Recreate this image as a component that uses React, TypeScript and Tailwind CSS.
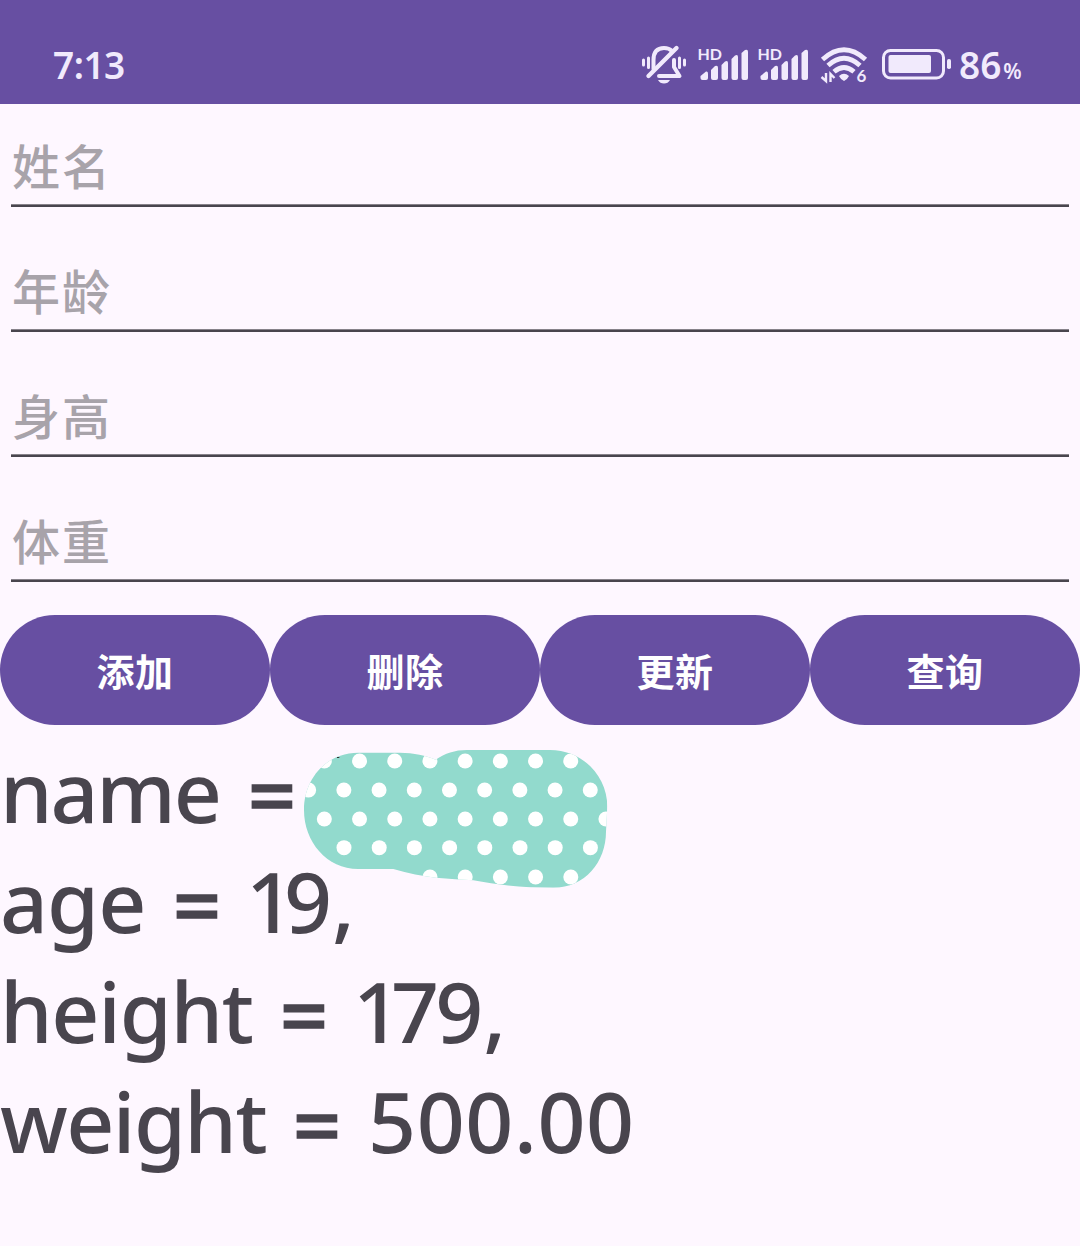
import React from 'react';

const fields = ['姓名', '年龄', '身高', '体重'];
const actions = ['添加', '删除', '更新', '查询'];

function MutedBell() {
  return (
    <svg className="h-[44px] w-[50px] shrink-0" viewBox="639 42 50 44" fill="none" stroke="#f1eafc" strokeWidth="4" strokeLinecap="round" strokeLinejoin="round">
      <path d="M653.500 69V60C653.500 52 657 48 664 48C667.500 48 670 49 672 51" />
      <path d="M674 60V67L679.500 76H659" />
      <path d="M648.500 76L676.500 48" strokeWidth="4.400" />
      <path d="M643.500 60V65M648.500 58V67.500M679.500 58V67.500M684.500 60V65" strokeWidth="3" />
      <path d="M658 80H670Q668 83.500 664 83.500T658 80Z" fill="#f1eafc" stroke="none" />
    </svg>
  );
}

function Signal() {
  return (
    <svg className="h-[44px] w-[52px] shrink-0" viewBox="697 42 52 44" fill="#f1eafc">
      <text x="697.500" y="60" fontSize="16" fontWeight="700" fontFamily="Lato, sans-serif" textLength="24.500" lengthAdjust="spacing">HD</text>
      <path d="M700.500 76L706 71.500Q708 71 708 73.500V78Q708 80 706 80H702.500Q700.500 80 700.500 78Z" />
      <path d="M711 70L715 66Q718 65 718 67.500V78Q718 80 716 80H713Q711 80 711 78Z" />
      <path d="M721.500 65L725 61.500Q728 60 728 63V78Q728 80 726 80H723.500Q721.500 80 721.500 78Z" />
      <path d="M731.500 59L735 55.500Q738 54 738 57V78Q738 80 736 80H733.500Q731.500 80 731.500 78Z" />
      <path d="M741.500 53L745 50Q748 49 748 51.500V78Q748 80 746 80H743.500Q741.500 80 741.500 78Z" />
    </svg>
  );
}

function Wifi() {
  return (
    <svg className="h-[44px] w-[50px] shrink-0" viewBox="819 42 50 44" fill="none" stroke="#f1eafc" strokeWidth="4.8">
      <path d="M822.500 59.500Q844 40 865.500 59.500" />
      <path d="M828 65.500Q844 51 860 65.500" />
      <path d="M834 71.800Q844 63 854 71.800" />
      <path d="M839 76Q844 71.500 849 76Q847 80 844 81Q841 80 839 76Z" fill="#f1eafc" stroke="none" />
      <path d="M826 73V81L821.500 77M830.500 82V74L834.500 78" strokeWidth="2.400" />
      <text x="856.500" y="82" fontSize="17" fontWeight="700" fontFamily="Lato, sans-serif" fill="#f1eafc" stroke="none">6</text>
    </svg>
  );
}

function Battery() {
  return (
    <svg className="h-[44px] w-[70px] shrink-0" viewBox="881 42 70 44" fill="#f1eafc">
      <rect x="883.500" y="50.500" width="60" height="27.500" rx="7" fill="none" stroke="#f1eafc" strokeWidth="3" />
      <rect x="888.500" y="55" width="42.500" height="18" rx="2" />
      <rect x="947" y="59" width="4" height="10" rx="1.800" />
    </svg>
  );
}

function StatusBar() {
  return (
    <header className="flex h-[104px] items-start bg-[#674fa2] pt-[42px] font-['Noto_Sans',sans-serif] text-[#f1eafc]">
      <div className="ml-[53px] text-[37px] leading-[45px] font-semibold tracking-[-0.5px]">7:13</div>
      <div className="ml-auto flex w-[441px]">
        <MutedBell />
        <div className="ml-[8px] flex"><Signal /></div>
        <div className="ml-[8px] flex"><Signal /></div>
        <div className="ml-[10px] flex"><Wifi /></div>
        <div className="ml-[12px] flex"><Battery /></div>
        <div className="ml-[8px] flex items-baseline leading-[45px] font-semibold">
          <span className="text-[37px]">86</span>
          <span className="ml-[2px] text-[21px]">%</span>
        </div>
      </div>
    </header>
  );
}

const dotRows = [
  { y: 78, start: 103, count: 8 },
  { y: 165, start: 56, count: 9 },
  { y: 252, start: 103, count: 9 },
  { y: 338, start: 162, count: 8 },
  { y: 426, start: 420, count: 5 },
];

function Redaction() {
  return (
    <svg className="absolute top-[10px] left-[290px] h-[165px] w-[340px]" viewBox="0 0 1020 495">
      <defs>
        <clipPath id="patch">
          <path d="M42 225C42 130 110 53 205 53H330C370 53 410 62 437 74C465 55 495 45 530 45H780C880 45 952 125 952 215L948 290C948 380 885 458 790 458C700 458 620 450 550 436C480 432 400 430 310 402H205C110 402 42 320 42 225Z" />
        </clipPath>
      </defs>
      <g clipPath="url(#patch)">
        <rect width="1020" height="495" fill="#92dacd" />
        {dotRows.map((r) =>
          Array.from({ length: r.count }, (_, i) => (
            <circle key={`${r.y}-${i}`} cx={r.start + i * 105.6} cy={r.y} r="22.500" fill="#fff" />
          )),
        )}
      </g>
      <path d="M141 66h7v3h-7z" fill="#333" />
    </svg>
  );
}

function Equals() {
  return (
    <span className="translate-y-[3px] [-webkit-text-stroke:1.5px_#49454e]">=</span>
  );
}

export default function App() {
  return (
    <div className="h-[1246px] w-[1080px] overflow-hidden bg-[#fef7ff] font-['Noto_Sans','Noto_Sans_CJK_SC',sans-serif]">
      <StatusBar />
      <form className="flex flex-col">
        {fields.map((f) => (
          <label key={f} className="mx-[11px] mb-[22px] flex h-[103px] flex-col justify-end">
            <span className="pl-px font-['Noto_Sans_CJK_SC',sans-serif] text-[48px] leading-[70px] font-medium tracking-[2px] text-[#a8a3aa]">{f}</span>
            <span className="mt-[5px] h-[3px] shrink-0 border-t border-[#87828a] bg-[#49454e]" />
          </label>
        ))}
      </form>
      <div className="mt-[11px] grid h-[110px] grid-cols-4">
        {actions.map((a) => (
          <button key={a} className="rounded-full bg-[#674fa2] pb-px font-['Noto_Sans_CJK_SC',sans-serif] text-[38px] font-bold tracking-[0.5px] text-white">{a}</button>
        ))}
      </div>
      <div className="relative pt-[11px] text-[84px] leading-[110px] font-medium whitespace-pre text-[#49454e]">
        <div className="flex"><span className="w-[248px] tracking-[-2.2px]">name</span><Equals /></div>
        <div className="flex"><span className="w-[173px] tracking-[-1px]">age</span><span className="flex w-[73px]"><Equals /></span><span><span className="tracking-[-10px]">1</span>9,</span></div>
        <div className="flex"><span className="w-[280px] tracking-[-1.3px]">height</span><span className="flex w-[73px]"><Equals /></span><span><span className="tracking-[-10px]">1</span><span className="tracking-[-4px]">7</span>9,</span></div>
        <div className="flex"><span className="w-[293px] tracking-[-1.6px]">weight</span><span className="flex w-[75px]"><Equals /></span><span className="tracking-[0.6px]">500.00</span></div>
        <Redaction />
      </div>
    </div>
  );
}
